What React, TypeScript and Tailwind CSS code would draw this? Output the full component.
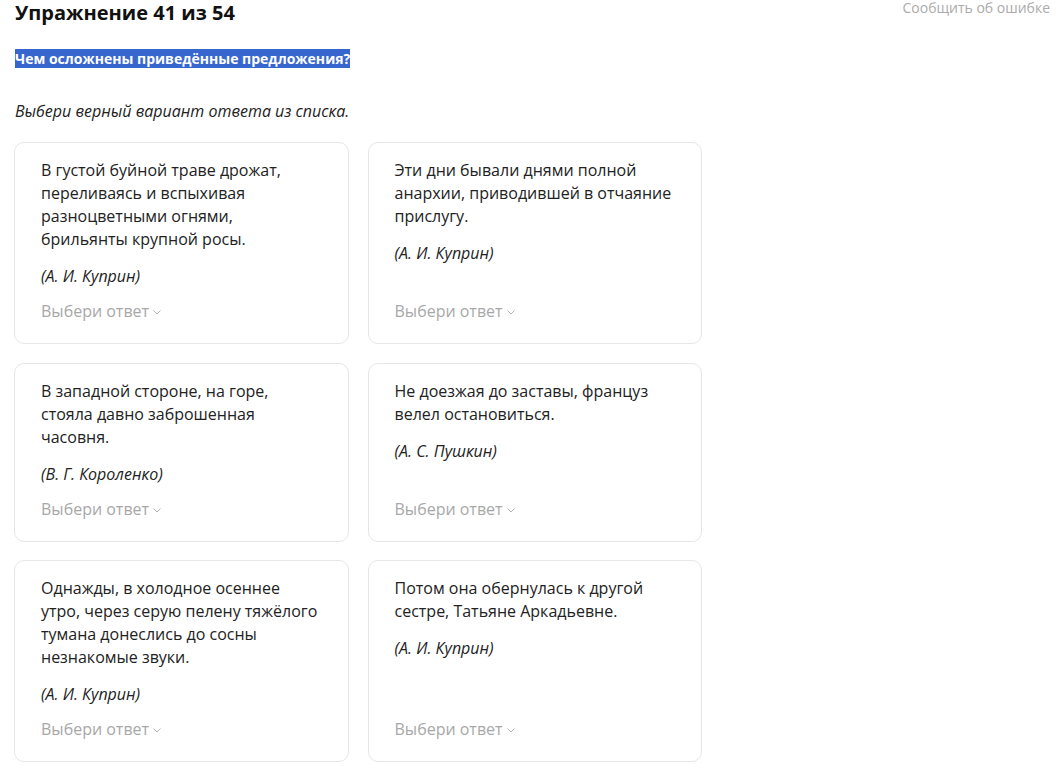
import React from 'react';

interface Item {
  text: string[];
  author: string;
}

const items: Item[] = [
  {
    text: ['В густой буйной траве дрожат,', 'переливаясь и вспыхивая', 'разноцветными огнями,', 'брильянты крупной росы.'],
    author: '(А. И. Куприн)',
  },
  {
    text: ['Эти дни бывали днями полной', 'анархии, приводившей в отчаяние', 'прислугу.'],
    author: '(А. И. Куприн)',
  },
  {
    text: ['В западной стороне, на горе,', 'стояла давно заброшенная', 'часовня.'],
    author: '(В. Г. Короленко)',
  },
  {
    text: ['Не доезжая до заставы, француз', 'велел остановиться.'],
    author: '(А. С. Пушкин)',
  },
  {
    text: ['Однажды, в холодное осеннее', 'утро, через серую пелену тяжёлого', 'тумана донеслись до сосны', 'незнакомые звуки.'],
    author: '(А. И. Куприн)',
  },
  {
    text: ['Потом она обернулась к другой', 'сестре, Татьяне Аркадьевне.'],
    author: '(А. И. Куприн)',
  },
];

const Chevron = () => (
  <svg width="10" height="10" viewBox="0 0 10 10" className="ml-[3px] mt-[1px]">
    <path d="M1.5 3.5 L5 7 L8.5 3.5" fill="none" stroke="#b5b5b5" strokeWidth="1" />
  </svg>
);

const Card: React.FC<{ item: Item }> = ({ item }) => (
  <div className="flex flex-col rounded-[10px] border border-[#e6e6e6] bg-white pl-[26px] pr-4 pt-[16px] pb-[20px]">
    <p className="text-[16px] leading-[23px] text-[#222]">
      {item.text.map((line, i) => (
        <span key={i} className="block whitespace-nowrap">
          {line}
        </span>
      ))}
    </p>
    <p className="mt-[14px] text-[16px] italic leading-[23px] text-[#222]">{item.author}</p>
    <div className="mt-auto flex items-center pt-[12px] text-[16px] leading-[23px] text-[#a8a8a8]">
      Выбери ответ
      <Chevron />
    </div>
  </div>
);

export default function App() {
  return (
    <div className="min-h-[777px] bg-white font-['Open_Sans',sans-serif]">
      <div className="flex items-start justify-between pl-[15px] pr-[6px]">
        <h1 className="text-[20px] font-bold leading-[26px] text-[#111]">Упражнение 41 из 54</h1>
        <a className="mt-[-2px] text-[14px] leading-[20px] text-[#ababab]">Сообщить об ошибке</a>
      </div>
      <div className="mt-[20px] pl-[15px]">
        <span className="bg-[#3766cf] text-[14px] font-bold leading-[20px] text-white">
          Чем осложнены приведённые предложения?
        </span>
      </div>
      <p className="mt-[30px] pl-[15px] text-[16px] italic leading-[22px] text-[#222]">
        Выбери верный вариант ответа из списка.
      </p>
      <div className="mt-[20px] grid w-[702px] grid-cols-2 gap-x-[19px] gap-y-[18.5px] pl-[14px]">
        {items.map((item, i) => (
          <Card key={i} item={item} />
        ))}
      </div>
    </div>
  );
}
